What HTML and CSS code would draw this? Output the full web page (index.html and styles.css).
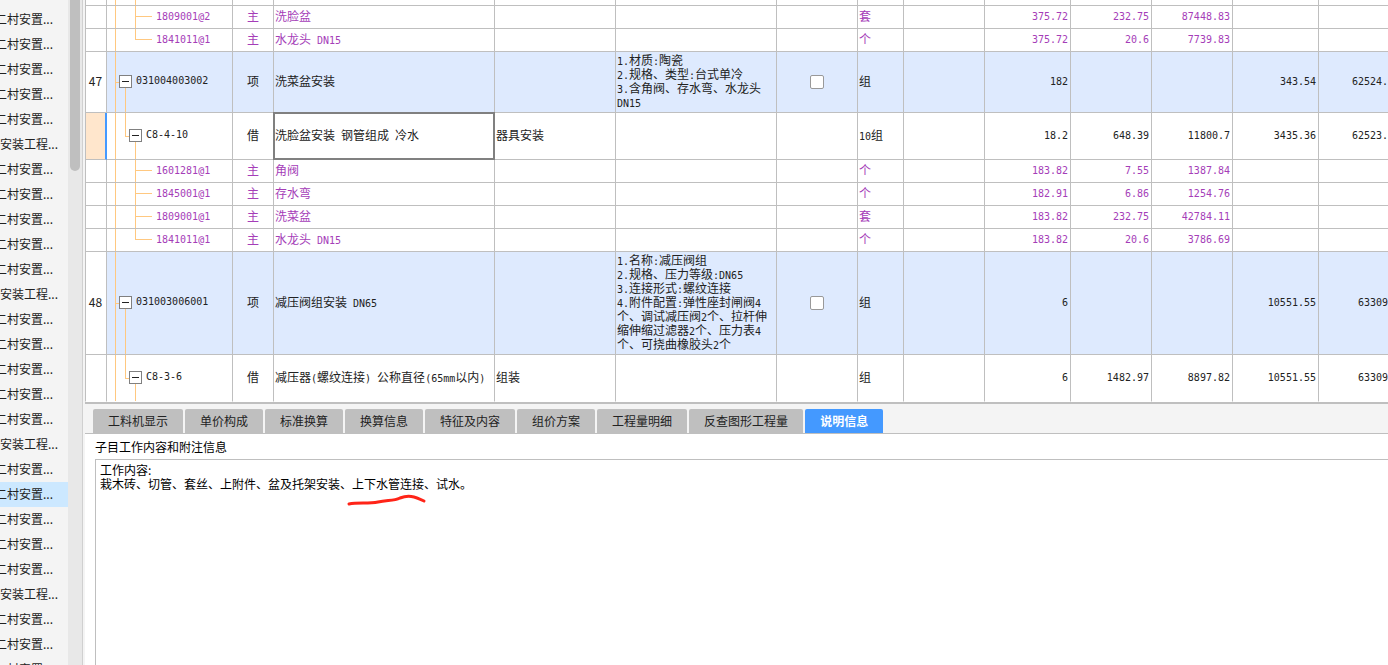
FILE: index.html
```html
<!DOCTYPE html>
<html lang="zh-CN">
<head>
<meta charset="utf-8">
<title>说明信息</title>
<link rel="stylesheet" href="styles.css">
</head>
<body>
<nav class="sidebar">
<ul class="projects">
<li>二村安置...</li><li>二村安置...</li><li>二村安置...</li><li>二村安置...</li><li>二村安置...</li><li class="group">安装工程...</li>
<li>二村安置...</li><li>二村安置...</li><li>二村安置...</li><li>二村安置...</li><li>二村安置...</li><li class="group">安装工程...</li>
<li>二村安置...</li><li>二村安置...</li><li>二村安置...</li><li>二村安置...</li><li>二村安置...</li><li class="group">安装工程...</li>
<li>二村安置...</li><li class="current">二村安置...</li><li>二村安置...</li><li>二村安置...</li><li>二村安置...</li><li class="group">安装工程...</li>
<li>二村安置...</li><li>二村安置...</li><li>二村安置...</li>
</ul>
<div class="scrollbar"><div class="thumb"></div></div>
</nav>
<main class="main">
<table class="grid">
<colgroup><col class="c-no"><col class="c-code"><col class="c-type"><col class="c-name"><col class="c-w121"><col class="c-desc"><col class="c-w81"><col class="c-unit"><col class="c-w81"><col class="c-w86"><col class="c-w81"><col class="c-w81"><col class="c-w86"><col></colgroup>
<tbody>
<tr class="cut"><td></td><td class="tree leaf-cut"></td><td></td><td></td><td></td><td></td><td></td><td></td><td></td><td></td><td></td><td></td><td></td><td></td></tr>
<tr class="mat"><td></td><td class="tree leaf">1809001@2</td><td class="type">主</td><td>洗脸盆</td><td></td><td></td><td></td><td>套</td><td></td><td class="num">375.72</td><td class="num">232.75</td><td class="num">87448.83</td><td></td><td></td></tr>
<tr class="mat"><td></td><td class="tree leaf last">1841011@1</td><td class="type">主</td><td>水龙头<span class="lat"> DN15</span></td><td></td><td></td><td></td><td>个</td><td></td><td class="num">375.72</td><td class="num">20.6</td><td class="num">7739.83</td><td></td><td></td></tr>
<tr class="item short"><td class="no">47</td><td class="tree parent"><div class="node"><button class="toggle" aria-label="折叠"></button>031004003002</div></td><td class="type">项</td><td>洗菜盆安装</td><td></td><td><span class="lat">1.</span>材质<span class="lat">:</span>陶瓷<br><span class="lat">2.</span>规格、类型<span class="lat">:</span>台式单冷<br><span class="lat">3.</span>含角阀、存水弯、水龙头<br><span class="lat">DN15</span></td><td class="check"><input type="checkbox" aria-label="洗菜盆安装"></td><td>组</td><td></td><td class="num">182</td><td></td><td></td><td class="num">343.54</td><td class="num edge">62524.</td></tr>
<tr class="quota"><td class="active-no"></td><td class="tree child"><div class="node"><button class="toggle" aria-label="折叠"></button>C8-4-10</div></td><td class="type">借</td><td class="active-cell">洗脸盆安装<span class="lat"> </span>钢管组成<span class="lat"> </span>冷水</td><td>器具安装</td><td></td><td></td><td><span class="lat">10</span>组</td><td></td><td class="num">18.2</td><td class="num">648.39</td><td class="num">11800.7</td><td class="num">3435.36</td><td class="num edge">62523.</td></tr>
<tr class="mat"><td></td><td class="tree leaf">1601281@1</td><td class="type">主</td><td>角阀</td><td></td><td></td><td></td><td>个</td><td></td><td class="num">183.82</td><td class="num">7.55</td><td class="num">1387.84</td><td></td><td></td></tr>
<tr class="mat"><td></td><td class="tree leaf">1845001@1</td><td class="type">主</td><td>存水弯</td><td></td><td></td><td></td><td>个</td><td></td><td class="num">182.91</td><td class="num">6.86</td><td class="num">1254.76</td><td></td><td></td></tr>
<tr class="mat"><td></td><td class="tree leaf">1809001@1</td><td class="type">主</td><td>洗菜盆</td><td></td><td></td><td></td><td>套</td><td></td><td class="num">183.82</td><td class="num">232.75</td><td class="num">42784.11</td><td></td><td></td></tr>
<tr class="mat"><td></td><td class="tree leaf last">1841011@1</td><td class="type">主</td><td>水龙头<span class="lat"> DN15</span></td><td></td><td></td><td></td><td>个</td><td></td><td class="num">183.82</td><td class="num">20.6</td><td class="num">3786.69</td><td></td><td></td></tr>
<tr class="item tall"><td class="no">48</td><td class="tree parent"><div class="node"><button class="toggle" aria-label="折叠"></button>031003006001</div></td><td class="type">项</td><td>减压阀组安装<span class="lat"> DN65</span></td><td></td><td><span class="lat">1.</span>名称<span class="lat">:</span>减压阀组<br><span class="lat">2.</span>规格、压力等级<span class="lat">:DN65</span><br><span class="lat">3.</span>连接形式<span class="lat">:</span>螺纹连接<br><span class="lat">4.</span>附件配置<span class="lat">:</span>弹性座封闸阀<span class="lat">4</span><br>个、调试减压阀<span class="lat">2</span>个、拉杆伸<br>缩伸缩过滤器<span class="lat">2</span>个、压力表<span class="lat">4</span><br>个、可挠曲橡胶头<span class="lat">2</span>个</td><td class="check"><input type="checkbox" aria-label="减压阀组安装"></td><td>组</td><td></td><td class="num">6</td><td></td><td></td><td class="num">10551.55</td><td class="num edge">63309</td></tr>
<tr class="quota end"><td></td><td class="tree child"><div class="node"><button class="toggle" aria-label="折叠"></button>C8-3-6</div></td><td class="type">借</td><td>减压器<span class="lat">(</span>螺纹连接<span class="lat">) </span>公称直径<span class="lat">(65mm</span>以内<span class="lat">)</span></td><td>组装</td><td></td><td></td><td>组</td><td></td><td class="num">6</td><td class="num">1482.97</td><td class="num">8897.82</td><td class="num">10551.55</td><td class="num edge">63309</td></tr>
</tbody>
</table>
<div class="tabs" role="tablist">
<button role="tab">工料机显示</button><button role="tab">单价构成</button><button role="tab">标准换算</button><button role="tab">换算信息</button><button role="tab">特征及内容</button><button role="tab">组价方案</button><button role="tab">工程量明细</button><button role="tab">反查图形工程量</button><button role="tab" class="selected" aria-selected="true">说明信息</button>
</div>
<section class="panel">
<label for="notes">子目工作内容和附注信息</label>
<div class="notes-box">
<textarea id="notes" readonly>工作内容:
栽木砖、切管、套丝、上附件、盆及托架安装、上下水管连接、试水。</textarea>
<svg class="mark" width="82" height="14" viewBox="0 0 82 14" aria-hidden="true"><path d="M3 10 C12 8 22 10 32 8 S48 7 54 4 C62 1 68 2 78 7" fill="none" stroke="#ff2418" stroke-width="3" stroke-linecap="round" stroke-linejoin="round"/></svg>
</div>
</section>
</main>
</body>
</html>
```
FILE: styles.css
```css
* { box-sizing: border-box; }

body {
  margin: 0;
  height: 100vh;
  display: flex;
  overflow: hidden;
  background: #fff;
  color: #222;
  font: 12px/14px "Noto Sans CJK SC", "Liberation Sans", sans-serif;
}

button, textarea { font: inherit; }

/* Project list */
.sidebar {
  flex: none;
  display: flex;
  overflow: hidden;
  background: #f4f4f4;
  border-right: 1px solid #d0d0d0;
}

.projects {
  width: 68px;
  margin: 0;
  padding: 7px 0 0;
  list-style: none;
  overflow: hidden;
}

.projects li {
  height: 25px;
  line-height: 23px;
  text-indent: -5px;
  white-space: nowrap;
}

.projects .group { text-indent: 0; }
.projects .current { background: #cce8ff; }

.scrollbar {
  width: 14px;
  padding: 0 2px;
  background: #e8e8e8;
}

.thumb {
  height: 171px;
  border-radius: 0 0 5px 5px;
  background: #bfbfbf;
}

.main {
  flex: 1;
  min-width: 0;
  display: flex;
  flex-direction: column;
  border-left: 2px solid #f4f4f4;
}

/* Quota grid */
.grid {
  width: 100%;
  table-layout: fixed;
  border-collapse: separate;
  border-spacing: 0;
}

.c-no { width: 22px; }
.c-code { width: 126px; }
.c-type { width: 41px; }
.c-name { width: 221px; }
.c-w121 { width: 121px; }
.c-desc { width: 161px; }
.c-w81 { width: 81px; }
.c-w86 { width: 86px; }
.c-unit { width: 46px; }

.grid td {
  padding: 0 0 2px 1px;
  border: 0 solid #bfbfbf;
  border-width: 0 1px 1px 0;
  white-space: nowrap;
}

.grid td:first-child { border-left-width: 1px; }
.grid td:last-child { border-right-width: 0; }

.cut { height: 6px; }
.mat { height: 23px; color: #a53db8; }
.short { height: 61px; }
.quota { height: 47px; }
.tall { height: 103px; }
.grid .end td { border-bottom-color: #fff; }

.lat {
  font: 10px/0 "DejaVu Sans Mono", monospace;
  white-space: pre;
}

.grid .num,
.grid .tree {
  font: 10px/14px "DejaVu Sans Mono", monospace;
}

.grid .num { padding: 0 2px 0 0; text-align: right; }
.grid .edge { padding: 0; }
.grid .type { padding: 0 0 2px; text-align: center; }
.grid .no { padding: 0 1px 2px 0; text-align: center; background: #fff; }
.grid .check { padding: 0; text-align: center; }
.item td { background-color: #deeafe; }

.grid .active-no {
  background: #ffe6cc;
  border-right: 2px solid #4499ff;
}

.active-cell { position: relative; }

.active-cell::after {
  content: "";
  position: absolute;
  inset: -1px;
  border: 2px solid #808080;
}

/* Tree connectors */
.tree {
  --line: linear-gradient(#ffc880, #ffc880);
  background-repeat: no-repeat;
}

.grid .leaf { padding: 0 0 0 49px; }

.leaf-cut {
  background-image: var(--line), var(--line);
  background-position: 8px 0, 28px 0;
  background-size: 1px 100%, 1px 100%;
}

.leaf {
  background-image: var(--line), var(--line), var(--line);
  background-position: 8px 0, 28px 0, 28px 10px;
  background-size: 1px 100%, 1px 100%, 17px 1px;
}

.leaf.last { background-size: 1px 100%, 1px 50%, 17px 1px; }

.parent {
  background-image: var(--line), var(--line), var(--line);
  background-position: 8px 0, 8px 50%, 18px 100%;
  background-size: 1px 100%, 4px 1px, 1px 50%;
}

.child {
  background-image: var(--line), var(--line), var(--line), var(--line);
  background-position: 8px 0, 18px 0, 18px 50%, 28px 100%;
  background-size: 1px 100%, 1px 50%, 4px 1px, 1px 50%;
}

.grid .parent { padding-left: 12px; }
.grid .child { padding-left: 22px; }

.node {
  display: flex;
  align-items: center;
  gap: 4px;
}

.toggle {
  width: 13px;
  height: 13px;
  padding: 2px;
  border: 1px solid #808080;
  background: #fff linear-gradient(#222, #222) center / 7px 1px no-repeat;
}

input[type="checkbox"] {
  display: block;
  width: 14px;
  height: 14px;
  margin: 0 auto;
  appearance: none;
  border: 1px solid #999;
  border-radius: 2px;
  background: #fff;
}

/* Detail tabs */
.tabs {
  display: flex;
  gap: 2px;
  padding: 5px 8px 0 8px;
  border-top: 2px solid #bfbfbf;
  border-bottom: 1px solid #bfbfbf;
  background: #f4f4f4;
}

.tabs button {
  height: 24px;
  padding: 0 15px;
  border: 0;
  border-radius: 2px 2px 0 0;
  background: #bfbfbf;
  color: #222;
  white-space: nowrap;
}

.tabs .selected {
  background: #4499ff;
  color: #fff;
  font-weight: bold;
}

.panel {
  flex: 1;
  min-height: 0;
  display: flex;
  flex-direction: column;
  gap: 5px;
  padding: 6px 0 0 10px;
  color: #000;
}

.notes-box {
  flex: 1;
  min-height: 0;
  position: relative;
  display: flex;
}

textarea {
  flex: 1;
  padding: 3px 4px;
  border: 1px solid #bfbfbf;
  border-width: 1px 0 0 1px;
  background: #fff;
  color: #000;
  resize: none;
  outline: none;
}

/* Hand-drawn underline beneath the pipe connection phrase */
.mark {
  position: absolute;
  left: 251px;
  top: 35px;
}
```
